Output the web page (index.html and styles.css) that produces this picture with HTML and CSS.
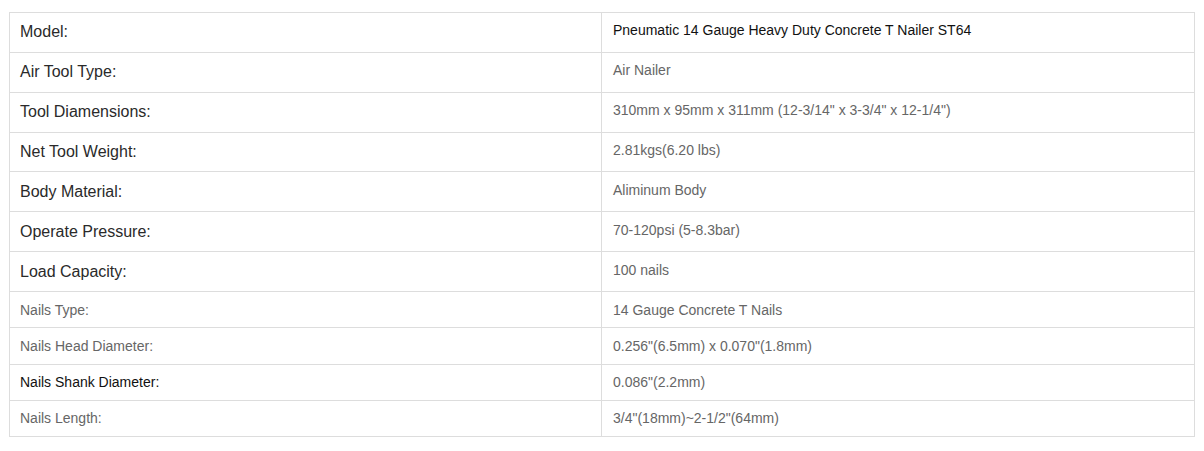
FILE: index.html
```html
<!DOCTYPE html>
<html>
<head>
<meta charset="utf-8">
<link rel="stylesheet" href="styles.css">
</head>
<body>
<div class="wrap">
<table class="spec">
  <tr class="big"><td class="label">Model:</td><td class="value dark">Pneumatic 14 Gauge Heavy Duty Concrete T Nailer ST64</td></tr>
  <tr class="big"><td class="label">Air Tool Type:</td><td class="value">Air Nailer</td></tr>
  <tr class="big"><td class="label">Tool Diamensions:</td><td class="value">310mm x 95mm x 311mm (12-3/14" x 3-3/4" x 12-1/4")</td></tr>
  <tr class="big"><td class="label">Net Tool Weight:</td><td class="value">2.81kgs(6.20 lbs)</td></tr>
  <tr class="big"><td class="label">Body Material:</td><td class="value">Aliminum Body</td></tr>
  <tr class="big"><td class="label">Operate Pressure:</td><td class="value">70-120psi (5-8.3bar)</td></tr>
  <tr class="big"><td class="label">Load Capacity:</td><td class="value">100 nails</td></tr>
  <tr class="small"><td class="label">Nails Type:</td><td class="value">14 Gauge Concrete T Nails</td></tr>
  <tr class="small"><td class="label">Nails Head Diameter:</td><td class="value">0.256"(6.5mm) x 0.070"(1.8mm)</td></tr>
  <tr class="small"><td class="label dark">Nails Shank Diameter:</td><td class="value">0.086"(2.2mm)</td></tr>
  <tr class="small"><td class="label">Nails Length:</td><td class="value">3/4"(18mm)~2-1/2"(64mm)</td></tr>
</table>
</div>
</body>
</html>
```

FILE: styles.css
```css
html, body {
  margin: 0;
  padding: 0;
  background: #fff;
}
body {
  font-family: "Liberation Sans", Arial, sans-serif;
}
.wrap {
  padding: 12px 9px 0 9px;
}
.spec {
  width: 1186px;
  border-collapse: collapse;
  table-layout: fixed;
}
.spec td {
  border: 1px solid #ddd;
  padding: 0 10px;
  vertical-align: middle;
  font-size: 14px;
  color: #666;
  line-height: 18px;
}
.spec td.label {
  width: 571px;
}
.spec td.value {
  padding-left: 11px;
}
.spec tr.big td {
  height: 38.86px;
}
.spec tr.big td.value {
  height: 34.86px;
  padding-bottom: 4px;
}
.spec tr.big td.label {
  font-size: 16px;
  color: #2a2a2a;
}
.spec tr.small td {
  height: 35.25px;
}
.spec td.dark {
  color: #111;
}
.spec tr.small td.label.dark {
  color: #111;
}
```
